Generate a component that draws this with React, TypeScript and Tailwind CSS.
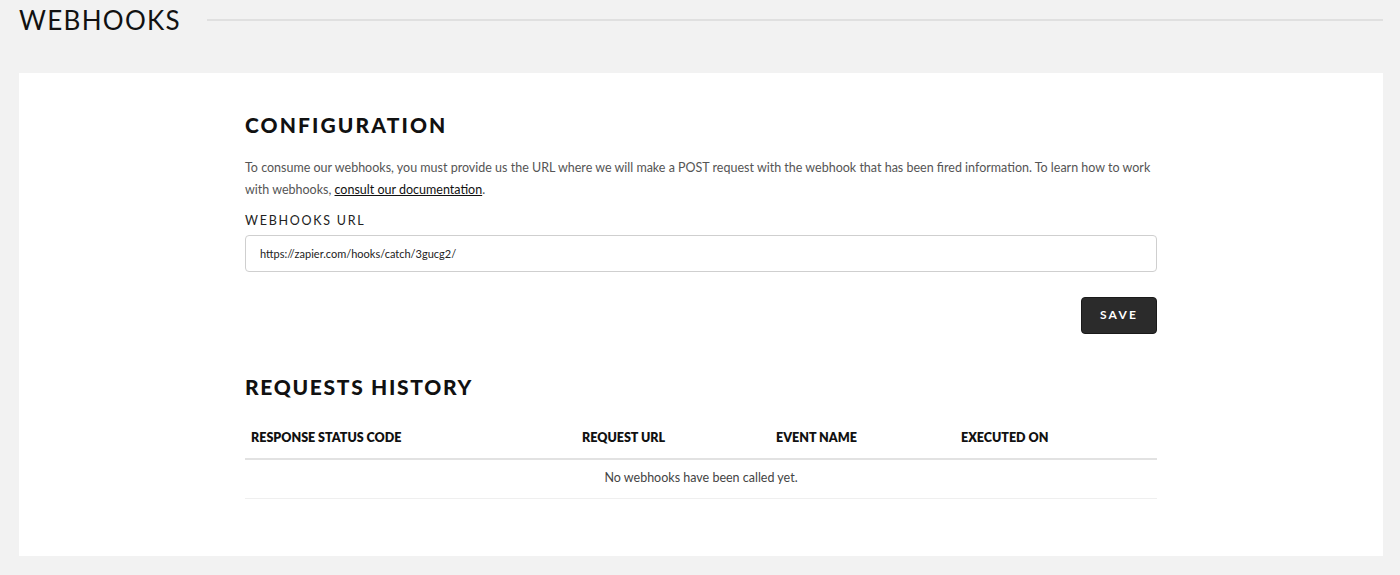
export default function App() {
  const cols = [
    { label: "RESPONSE STATUS CODE", w: "w-[331px]" },
    { label: "REQUEST URL", w: "w-[194px]" },
    { label: "EVENT NAME", w: "w-[185px]" },
    { label: "EXECUTED ON", w: "flex-1" },
  ];

  return (
    <div
      className="min-h-[575px] bg-[#f2f2f2] text-[#111]"
      style={{ fontFamily: "Lato, 'Open Sans', sans-serif" }}
    >
      {/* Page title */}
      <div className="flex items-center h-[40px] pl-[19px] pr-[17px]">
        <h1 className="text-[26px] font-normal tracking-[0.05em] text-[#111] leading-none">WEBHOOKS</h1>
        <div className="flex-1 h-[2px] bg-[#e0e0e0] ml-[26px]" />
      </div>

      {/* Card */}
      <div className="mx-[19px] mr-[17px] mt-[33px] bg-white pt-[40px] pb-[57px]">
        <div className="w-[912px] ml-[226px]">
          <h2 className="text-[21px] font-black tracking-[0.1em] leading-none mt-[1px]">CONFIGURATION</h2>
          <p className="mt-[22px] text-[12.5px] leading-[22px] text-[#555]">
            To consume our webhooks, you must provide us the URL where we will make a POST request with the webhook that has been fired information. To learn how to work with webhooks,{" "}
            <a href="#" className="text-[#111] underline">consult our documentation</a>.
          </p>

          <label className="block mt-[14px] text-[12.5px] tracking-[0.14em] text-[#222] leading-none">WEBHOOKS URL</label>
          <input
            readOnly
            value="https://zapier.com/hooks/catch/3gucg2/"
            className="mt-[7px] w-full h-[37px] border border-[#cfcfcf] rounded-[4px] px-[14px] text-[11px] text-[#222] outline-none"
          />

          <div className="flex justify-end mt-[25px]">
            <button className="w-[76px] h-[37px] bg-[#2b2b2b] rounded-[4px] border border-[#1a1a1a] text-white text-[12px] font-bold tracking-[0.18em]">
              SAVE
            </button>
          </div>

          <h2 className="mt-[42px] text-[21px] font-black tracking-[0.08em] leading-none">REQUESTS HISTORY</h2>

          <div className="mt-[32px]">
            <div className="flex h-[31px] items-start border-b-2 border-[#e2e2e2] px-[6px]">
              {cols.map((c) => (
                <div key={c.label} className={`${c.w} text-[12.5px] font-extrabold text-[#111]`}>
                  {c.label}
                </div>
              ))}
            </div>
            <div className="h-[39px] flex items-center justify-center border-b border-[#efefef] text-[12.5px] text-[#444]">
              No webhooks have been called yet.
            </div>
          </div>
        </div>
      </div>
    </div>
  );
}
